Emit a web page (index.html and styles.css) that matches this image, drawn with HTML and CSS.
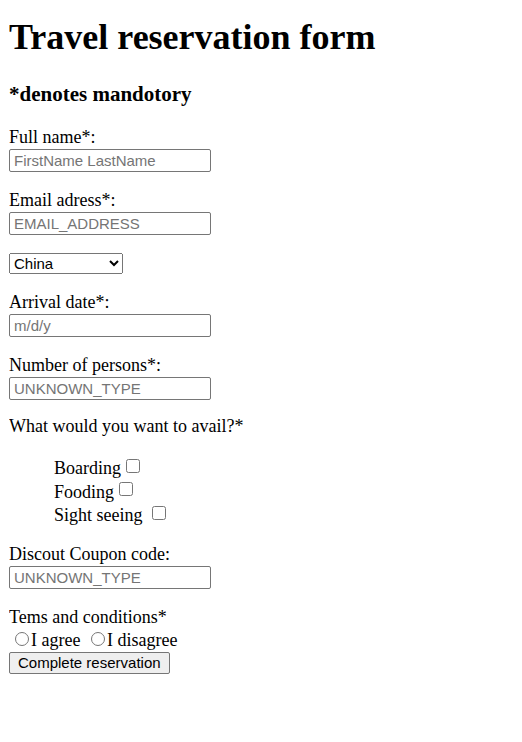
FILE: index.html
```html
<!DOCTYPE html>
<html>
<head>
<meta charset="utf-8">
<title>Travel reservation form</title>
<link rel="stylesheet" href="styles.css">
</head>
<body>
<h1 class="title">Travel reservation form</h1>
<h3 class="note">*denotes mandotory</h3>
<form class="form">
  <div class="group">
    <label class="label" for="name">Full name*:</label>
    <input class="field" id="name" type="text" placeholder="FirstName LastName">
  </div>
  <div class="group">
    <label class="label" for="email">Email adress*:</label>
    <input class="field" id="email" type="email" placeholder="EMAIL_ADDRESS">
  </div>
  <div class="group">
    <select class="country">
      <option>China</option>
      <option>India</option>
      <option>Japan</option>
      <option>Nepal</option>
    </select>
  </div>
  <div class="group">
    <label class="label" for="date">Arrival date*:</label>
    <input class="field" id="date" type="text" placeholder="m/d/y">
  </div>
  <div class="group">
    <label class="label" for="persons">Number of persons*:</label>
    <input class="field" id="persons" type="text" placeholder="UNKNOWN_TYPE">
  </div>
  <p class="avail">What would you want to avail?*</p>
  <div class="options">
    <label class="option">Boarding<input class="check" type="checkbox"></label>
    <label class="option">Fooding<input class="check" type="checkbox"></label>
    <label class="option">Sight seeing&nbsp;<input class="check" type="checkbox"></label>
  </div>
  <div class="group">
    <label class="label" for="coupon">Discout Coupon code:</label>
    <input class="field" id="coupon" type="text" placeholder="UNKNOWN_TYPE">
  </div>
  <div class="terms-title">Tems and conditions*</div>
  <div class="terms">
    <label><input class="radio" type="radio" name="terms">I agree</label>
    <label><input class="radio" type="radio" name="terms">I disagree</label>
  </div>
  <button class="submit" type="submit">Complete reservation</button>
</form>
</body>
</html>
```

FILE: styles.css
```css
body {
  margin: 9px;
  font-family: "Liberation Serif", "Times New Roman", serif;
  font-size: 18px;
  line-height: 20px;
  color: #000;
  background: #fff;
}
.title {
  font-size: 36px;
  line-height: 42px;
  margin: 7px 0 0;
}
.note {
  font-size: 21px;
  line-height: 24px;
  margin: 24px 0 21px;
}
.form {
  margin: 0;
}
.group {
  margin-bottom: 18px;
}
.label {
  display: block;
}
.field {
  display: block;
  font-family: "Liberation Sans", Arial, sans-serif;
  font-size: 15px;
  width: 202px;
  height: 23px;
  box-sizing: border-box;
  border: 1px solid #767676;
  border-radius: 2px;
  padding: 1px 4px;
  margin: 2px 0 0;
  background: #fff;
}
.field::placeholder {
  color: #757575;
}
.country {
  display: block;
  font-family: "Liberation Sans", Arial, sans-serif;
  font-size: 15px;
  width: 114px;
  height: 21px;
  box-sizing: border-box;
  margin: 0;
}
.avail {
  margin: -2px 0 21px;
}
.options {
  padding-left: 45px;
  line-height: 23.5px;
  margin-bottom: 16px;
}
.option {
  display: block;
}
.check {
  width: 14px;
  height: 14px;
  margin: 0 3px 0 5px;
  vertical-align: 1.5px;
}
.terms-title {
  margin-top: 1px;
}
.terms {
  line-height: 21px;
  padding-top: 3px;
}
.radio {
  width: 14px;
  height: 14px;
  margin: 2px 2px 0 6px;
}
.submit {
  display: block;
  font-family: "Liberation Sans", Arial, sans-serif;
  font-size: 15px;
  margin: 1px 0 0;
  height: 22px;
  padding: 1px 8px;
  border: 1px solid #767676;
  border-radius: 2px;
  background: #efefef;
  color: #000;
}
```
